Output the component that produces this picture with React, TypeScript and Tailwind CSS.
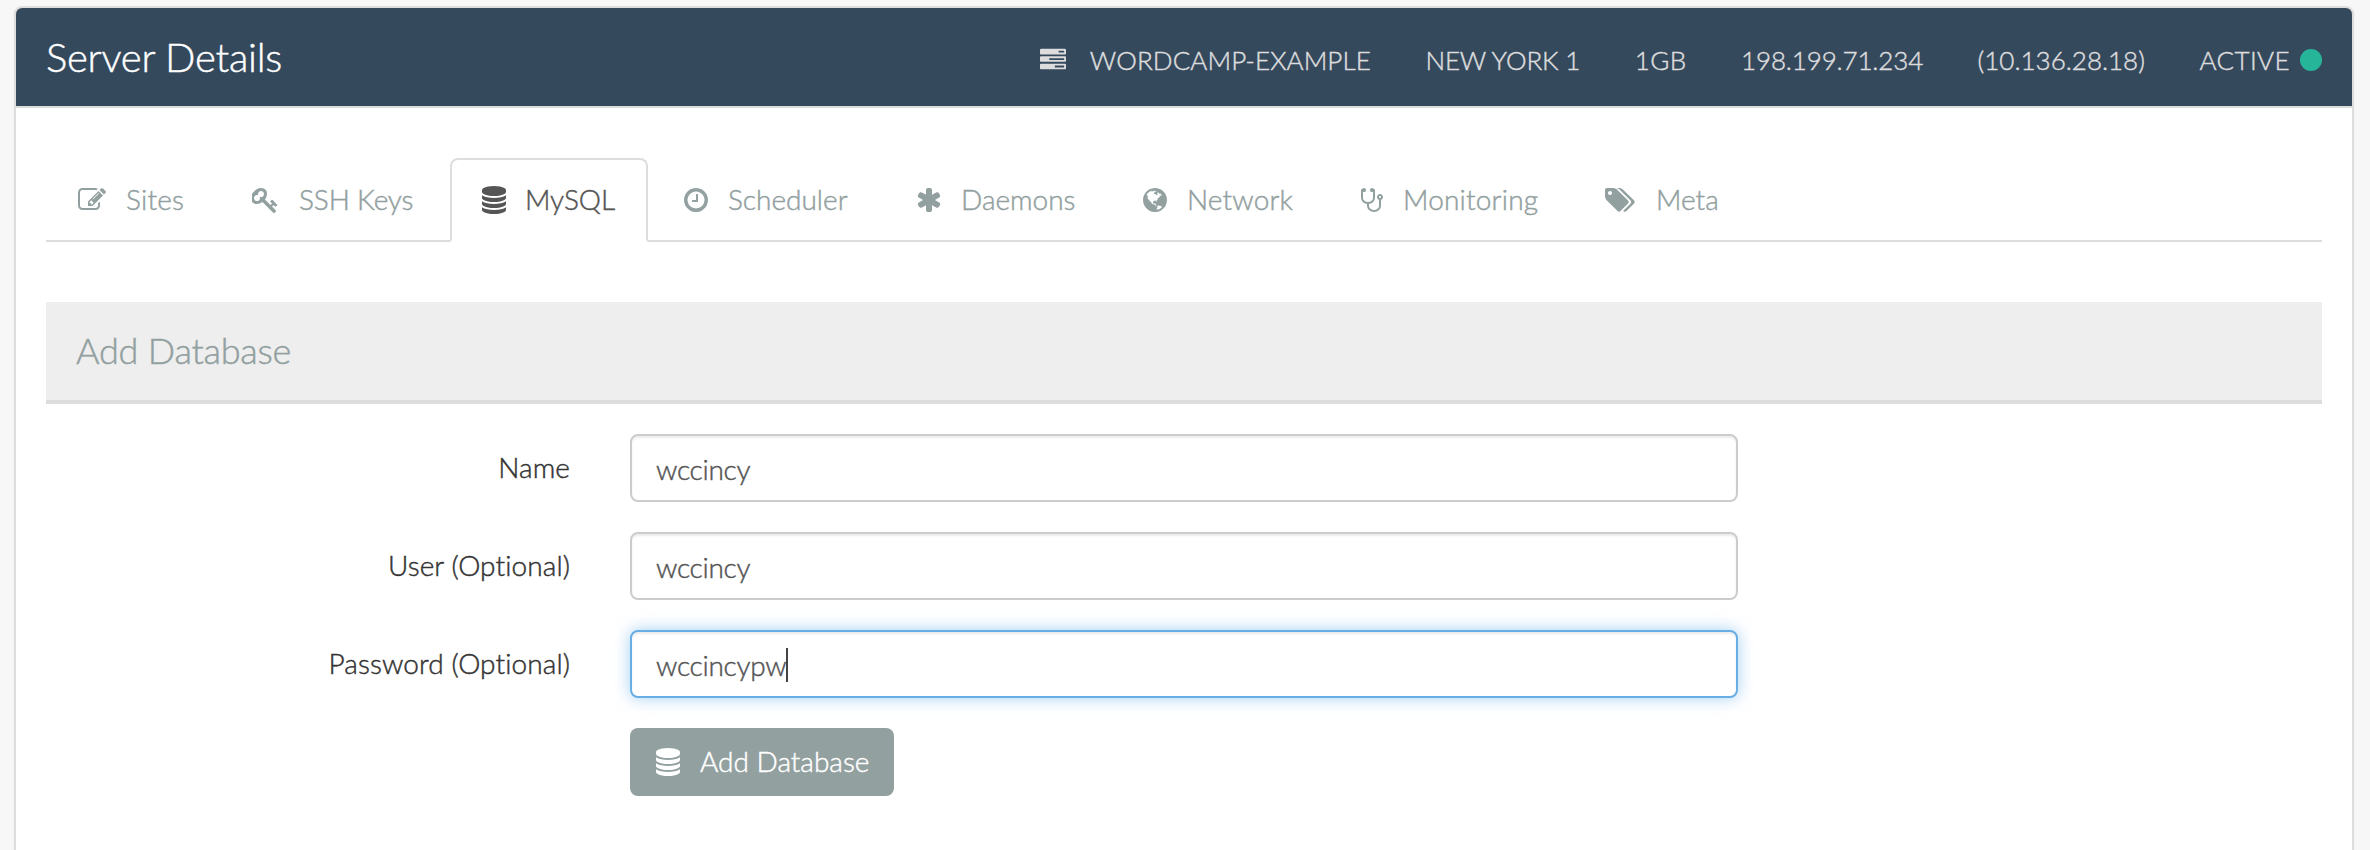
const icons = {
  edit: {
    box: '0 0 1792 1792',
    d: 'M888 1184l116-116-152-152-116 116v56h96v96h56zm440-720q-16-16-33 1l-350 350q-17 17-1 33t33-1l350-350q17-17 1-33zm80 594v190q0 119-84.5 203.5t-203.5 84.5h-832q-119 0-203.5-84.5t-84.5-203.5v-832q0-119 84.5-203.5t203.5-84.5h832q63 0 117 25 15 7 18 23 3 17-9 29l-49 49q-14 14-32 8-23-6-45-6h-832q-66 0-113 47t-47 113v832q0 66 47 113t113 47h832q66 0 113-47t47-113v-126q0-13 9-22l64-64q15-15 35-7t20 29zm-96-738l288 288-672 672h-288v-288zm444 132l-92 92-288-288 92-92q28-28 68-28t68 28l152 152q28 28 28 68t-28 68z',
  },
  key: {
    box: '64 0 1664 1792',
    d: 'M832 512q0-80-56-136t-136-56-136 56-56 136q0 42 19 83-41-19-83-19-80 0-136 56t-56 136 56 136 136 56 136-56 56-136q0-42-19-83 41 19 83 19 80 0 136-56t56-136zm851 704q0 17-49 66t-66 49q-9 0-28.5-16t-36.5-33-38.5-40-24.5-26l-96 96 220 220q28 28 28 68 0 42-39 81t-81 39q-40 0-68-28l-671-671q-176 131-365 131-163 0-265.5-102.5t-102.5-265.5q0-160 95-313t248-248 313-95q163 0 265.5 102.5t102.5 265.5q0 189-131 365l355 355 96-96q-3-3-26-24.5t-40-38.5-33-36.5-16-28.5q0-17 49-66t66-49q13 0 23 10 6 6 46 44.5t82 79.5 86.5 86 73 78 28.5 41z',
  },
  database: {
    box: '128 0 1536 1792',
    d: 'M896 768q237 0 443-43t325-127v170q0 69-103 128t-280 93.5-385 34.5-385-34.5-280-93.5-103-128v-170q119 84 325 127t443 43zm0 768q237 0 443-43t325-127v170q0 69-103 128t-280 93.5-385 34.5-385-34.5-280-93.5-103-128v-170q119 84 325 127t443 43zm0-384q237 0 443-43t325-127v170q0 69-103 128t-280 93.5-385 34.5-385-34.5-280-93.5-103-128v-170q119 84 325 127t443 43zm0-1152q208 0 385 34.5t280 93.5 103 128v128q0 69-103 128t-280 93.5-385 34.5-385-34.5-280-93.5-103-128v-128q0-69 103-128t280-93.5 385-34.5z',
  },
  clock: {
    box: '128 0 1536 1792',
    d: 'M1024 544v448q0 14-9 23t-23 9h-320q-14 0-23-9t-9-23v-64q0-14 9-23t23-9h224v-352q0-14 9-23t23-9h64q14 0 23 9t9 23zm416 352q0-148-73-273t-198-198-273-73-273 73-198 198-73 273 73 273 198 198 273 73 273-73 198-198 73-273zm224 0q0 209-103 385.5t-279.5 279.5-385.5 103-385.5-103-279.5-279.5-103-385.5 103-385.5 279.5-279.5 385.5-103 385.5 103 279.5 279.5 103 385.5z',
  },
  asterisk: {
    box: '64 0 1664 1792',
    d: 'M1546 1050q46 26 59.5 77.5t-12.5 97.5l-64 110q-26 46-77.5 59.5t-97.5-12.5l-266-153v307q0 52-38 90t-90 38h-128q-52 0-90-38t-38-90v-307l-266 153q-46 26-97.5 12.5t-77.5-59.5l-64-110q-26-46-12.5-97.5t59.5-77.5l266-154-266-154q-46-26-59.5-77.5t12.5-97.5l64-110q26-46 77.5-59.5t97.5 12.5l266 153v-307q0-52 38-90t90-38h128q52 0 90 38t38 90v307l266-153q46-26 97.5-12.5t77.5 59.5l64 110q26 46 12.5 97.5t-59.5 77.5l-266 154z',
  },
  globe: {
    box: '128 0 1536 1792',
    d: 'M896 128q209 0 385.5 103t279.5 279.5 103 385.5-103 385.5-279.5 279.5-385.5 103-385.5-103-279.5-279.5-103-385.5 103-385.5 279.5-279.5 385.5-103zm274 521q-2 1-9.5 9.5t-13.5 9.5q2 0 4.5-5t5-11 3.5-7q6-7 22-15 14-6 52-12 34-8 51 11-2-2 9.5-13t14.5-12q3-2 15-4.5t15-7.5l2-22q-12 1-17.5-7t-6.5-21q0 2-6 8 0-7-4.5-8t-11.5 1-9 1q-10-3-15-7.5t-8-16.5-4-15q-2-5-9.5-11t-9.5-10q-1-2-2.5-5.5t-3-6.5-4-5.5-5.5-2.5-7 5-7.5 10-4.5 5q-3-2-6-1.5t-4.5 1-4.5 3-5 3.5q-3 2-8.5 3t-8.5 2q15-5-1-11-10-4-16-3 9-4 7.5-12t-8.5-14h5q-1-4-8.5-8.5t-17.5-8.5-13-6q-8-5-34-9.5t-33-.5q-5 6-4.5 10.5t4 14 3.5 12.5q1 6-5.5 13t-6.5 12q0 7 14 15.5t10 21.5q-3 8-16 16t-16 12q-5 8-1.5 18.5t10.5 16.5q2 2 1.5 4t-3.5 4.5-5.5 4-6.5 3.5l-3 2q-11 5-20.5-6t-13.5-26q-7-25-16-30-23-8-29 1-5-13-41-26-25-9-58-4 6-1 0-15-7-15-19-12 3-6 4-17.5t1-13.5q3-13 12-23 1-1 7-8.5t9.5-13.5.5-6q35 4 50-11 5-5 11.5-17t10.5-17q9-6 14-5.5t14.5 5.5 14.5 5q14 1 15.5-11t-7.5-20q12 1 3-17-4-7-8-9-12-4-27 5-8 4 2 8-1-1-9.5 10.5t-16.5 17.5-16-5q-1-1-5.5-13.5t-9.5-13.5q-8 0-16 15 3-8-11-15t-24-8q19-12-8-27-7-4-20.5-5t-19.5 4q-5 7-5.5 11.5t5 8 10.5 5.5 11.5 4 8.5 3q14 10 8 14-2 1-8.5 3.5t-11.5 4.5-6 4q-3 4 0 14t-2 14q-5-5-9-17.5t-7-16.5q7 9-25 6l-10-1q-4 0-16 2t-20.5 1-13.5-8q-4-8 0-20 1-4 4-2-4-3-11-9.5t-10-8.5q-46 15-94 41 6 1 12-1 5-2 13-6.5t10-5.5q34-14 42-7l5-5q14 16 20 25-7-4-30-1-20 6-22 12 7 12 5 18-4-3-11.5-10t-14.5-11-15-5q-16 0-22 1-146 80-235 222 7 7 12 8 4 1 5 9t2.5 11 11.5-3q9 8 3 19 1-1 44 27 19 17 21 21 3 11-10 18-1-2-9-9t-9-4q-3 5 .5 18.5t10.5 12.5q-7 0-9.5 16t-2.5 35.5-1 23.5l2 1q-3 12 5.5 34.5t21.5 19.5q-13 3 20 43 6 8 8 9 3 2 12 7.5t15 10 10 10.5q4 5 10 22.5t14 23.5q-2 6 9.5 20t10.5 23q-1 0-2.5 1t-2.5 1q3 7 15.5 14t15.5 13q1 3 2 10t3 11 8 2q2-20-24-62-15-25-17-29-3-5-5.5-15.5t-4.5-14.5q2 0 6 1.5t8.5 3.5 7.5 4 2 3q-3 7 2 17.5t12 18.5 17 19 12 13q6 6 14 19.5t0 13.5q9 0 20 10.5t17 19.5q5 8 8 26t5 24q2 7 8.5 13.5t12.5 9.5l16 8 13 7q5 2 18.5 10.5t21.5 11.5q10 4 16 4t14.5-2.5 13.5-3.5q15-2 29 15t21 21q36 19 55 11-2 1 .5 7.5t8 15.5 9 14.5 5.5 8.5q5 6 18 15t18 15q6-4 7-9-3 8 7 20t18 10q14-3 14-32-31 15-49-18 0-1-2.5-5.5t-4-8.5-2.5-8.5 0-7.5 5-3q9 0 10-3.5t-2-12.5-4-13q-1-8-11-20t-12-15q-5 9-16 8t-16-9q0 1-1.5 5.5t-1.5 6.5q-13 0-15-1 1-3 2.5-17.5t3.5-22.5q1-4 5.5-12t7.5-14.5 4-12.5-4.5-9.5-17.5-2.5q-19 1-26 20-1 3-3 10.5t-5 11.5-9 7q-7 3-24 2t-24-5q-13-8-22.5-29t-9.5-37q0-10 2.5-26.5t3-25-5.5-24.5q3-2 9-9.5t10-10.5q2-1 4.5-1.5t4.5 0 4-1.5 3-6q-1-1-4-3-3-3-4-3 7 3 28.5-1.5t27.5 1.5q15 11 22-2 0-1-2.5-9.5t-.5-13.5q5 27 29 9 3 3 15.5 5t17.5 5q3 2 7 5.5t5.5 4.5 5-.5 8.5-6.5q10 14 12 24 11 40 19 44 7 3 11 2t4.5-9.5 0-14-1.5-12.5l-1-8v-18l-1-8q-15-3-18.5-12t1.5-18.5 15-18.5q1-1 8-3.5t15.5-6.5 12.5-8q21-19 15-35 7 0 11-9-1 0-5-3t-7.5-5-4.5-2q9-5 2-16 5-3 7.5-11t7.5-10q9 12 21 2 8-8 1-16 5-7 20.5-10.5t18.5-9.5q7 2 8-2t1-12 3-12q4-5 15-9t13-5l17-11q3-4 0-4 18 2 31-11 10-11-6-20 3-6-3-9.5t-15-5.5q3-1 11.5-.5t10.5-1.5q15-10-7-16-17-5-43 12zm-163 877q206-36 351-189-3-3-12.5-4.5t-12.5-3.5q-18-7-24-8 1-7-2.5-13t-8-9-12.5-8-11-7q-2-2-7-6t-7-5.5-7.5-4.5-8.5-2-10 1l-3 1q-3 1-5.5 2.5t-5.5 3-4 3 0 2.5q-21-17-36-22-5-1-11-5.5t-10.5-7-10-1.5-11.5 7q-5 5-6 15t-2 13q-7-5 0-17.5t2-18.5q-3-6-10.5-4.5t-12 4.5-11.5 8.5-9 6.5-8.5 5.5-8.5 7.5q-3 4-6 12t-5 11q-2-4-11.5-6.5t-9.5-5.5q2 10 4 35t5 38q7 31-12 48-27 25-29 40-4 22 12 26 0 7-8 20.5t-7 21.5q0 6 2 16z',
  },
  stethoscope: {
    box: '192 -128 1408 1792',
    d: 'M1472 576q0-26-19-45t-45-19-45 19-19 45 19 45 45 19 45-19 19-45zm128 0q0 62-35.5 111t-92.5 70v395q0 159-131.5 271.5t-316.5 112.5-316.5-112.5-131.5-271.5v-132q-164-20-274-128t-110-252v-512q0-26 19-45t45-19q6 0 16 2 17-30 47-48t65-18q53 0 90.5 37.5t37.5 90.5-37.5 90.5-90.5 37.5q-33 0-64-18v402q0 106 94 181t226 75 226-75 94-181v-402q-31 18-64 18-53 0-90.5-37.5t-37.5-90.5 37.5-90.5 90.5-37.5q35 0 65 18t47 48q10-2 16-2 26 0 45 19t19 45v512q0 144-110 252t-274 128v132q0 106 94 181t226 75 226-75 94-181v-395q-57-21-92.5-70t-35.5-111q0-80 56-136t136-56 136 56 56 136z',
  },
  tags: {
    box: '0 0 1920 1792',
    d: 'M448 448q0-53-37.5-90.5t-90.5-37.5-90.5 37.5-37.5 90.5 37.5 90.5 90.5 37.5 90.5-37.5 37.5-90.5zm1067 576q0 53-37 90l-491 492q-39 37-91 37-53 0-90-37l-715-716q-38-37-64.5-101t-26.5-117v-416q0-52 38-90t90-38h416q53 0 117 26.5t102 64.5l715 714q37 39 37 91zm384 0q0 53-37 90l-491 492q-39 37-91 37-36 0-59-14t-53-45l470-470q37-37 37-90 0-52-37-91l-715-714q-38-38-102-64.5t-117-26.5h224q53 0 117 26.5t102 64.5l715 714q37 39 37 91z',
  },
  tasks: {
    box: '0 0 1792 1792',
    d: 'M1024 1408h640v-128h-640v128zm-384-512h1024v-128h-1024v128zm640-512h384v-128h-384v128zm512 832v256q0 26-19 45t-45 19h-1664q-26 0-45-19t-19-45v-256q0-26 19-45t45-19h1664q26 0 45 19t19 45zm0-512v256q0 26-19 45t-45 19h-1664q-26 0-45-19t-19-45v-256q0-26 19-45t45-19h1664q26 0 45 19t19 45zm0-512v256q0 26-19 45t-45 19h-1664q-26 0-45-19t-19-45v-256q0-26 19-45t45-19h1664q26 0 45 19t19 45z',
  },
};

type IconName = keyof typeof icons;

function Icon({ name, className }: { name: IconName; className: string }) {
  return (
    <svg viewBox={icons[name].box} className={`shrink-0 fill-current ${className}`} aria-hidden="true">
      <path d={icons[name].d} />
    </svg>
  );
}

const tabs: { icon: IconName; label: string; size: string; width: string; active?: boolean }[] = [
  { icon: 'edit', label: 'Sites', size: 'w-[28px]', width: 'w-[170px] gap-[20px] tracking-[0.2px]' },
  { icon: 'key', label: 'SSH Keys', size: 'w-[26px]', width: 'w-[226px] gap-[21px] tracking-[-0.15px]' },
  { icon: 'database', label: 'MySQL', size: 'w-[24px]', width: 'w-[198px] gap-[19px]', active: true },
  { icon: 'clock', label: 'Scheduler', size: 'w-[24px]', width: 'w-[228px] gap-[20px]' },
  { icon: 'asterisk', label: 'Daemons', size: 'w-[26px]', width: 'w-[223px] gap-[19px]' },
  { icon: 'globe', label: 'Network', size: 'w-[24px]', width: 'w-[214px] gap-[20px] tracking-[0.15px]' },
  { icon: 'stethoscope', label: 'Monitoring', size: 'w-[22px]', width: 'w-[240px] gap-[20px] tracking-[0.2px]' },
  { icon: 'tags', label: 'Meta', size: 'w-[30px]', width: 'w-[180px] gap-[21px]' },
];

const fields = [
  { label: 'Name', value: 'wccincy' },
  { label: 'User (Optional)', value: 'wccincy' },
  { label: 'Password (Optional)', value: 'wccincypw', focused: true },
];

function Field({ label, value, focused }: { label: string; value: string; focused?: boolean }) {
  return (
    <div className="flex">
      <div className="flex h-[68px] w-[524px] items-center justify-end pb-[2px] tracking-[0.1px] text-[#333]">{label}</div>
      <div
        className={`ml-[60px] flex h-[68px] w-[1108px] items-center rounded-[8px] border-2 bg-white pl-6 pt-[2px] text-[#555] ${
          focused
            ? 'border-[#68aee6] shadow-[inset_0_2px_2px_rgba(0,0,0,0.075),0_0_16px_rgba(102,175,233,0.6)]'
            : 'border-[#ccc] shadow-[inset_0_2px_2px_rgba(0,0,0,0.075)]'
        }`}
      >
        <span className="tracking-[-0.3px]">{value}</span>
        {focused && <span className="h-[34px] w-[2px] bg-[#444]" />}
      </div>
    </div>
  );
}

export default function App() {
  return (
    <div className="h-[850px] overflow-hidden bg-[#f7f7f7] pl-[14px] pr-[16px] pt-[6px] font-['Lato',sans-serif] text-[28px] leading-[40px] font-light [-webkit-text-stroke:0.45px_currentColor]">
      <div className="h-[900px] rounded-t-[8px] border-2 border-[#ddd] bg-white shadow-[0_2px_2px_rgba(0,0,0,0.05)]">
        <header className="flex h-[100px] items-center justify-between rounded-t-[6px] border-b-2 border-[#ddd] bg-[#35495d] px-[30px] text-white">
          <h1 className="pb-[1px] text-[40px] leading-[44px] tracking-[-0.25px]">Server Details</h1>
          <div className="flex items-center gap-[54.5px] pt-[6px] text-[26px] text-[#ddd]">
            <span className="flex items-center gap-[24px] tracking-[0.1px]">
              <Icon name="tasks" className="h-[26px] w-[26px]" />
              WORDCAMP-EXAMPLE
            </span>
            <span className="tracking-[-0.15px]">NEW YORK 1</span>
            <span className="tracking-[0.4px]">1GB</span>
            <span className="tracking-[-0.15px]">198.199.71.234</span>
            <span>(10.136.28.18)</span>
            <span className="flex items-center gap-[10px] tracking-[0.4px]">
              ACTIVE
              <span className="h-[22px] w-[22px] rounded-full bg-[#27b599]" />
            </span>
          </div>
        </header>

        <main className="px-[30px] pt-[50px]">
          <nav className="flex h-[84px] gap-[4px] border-b-2 border-[#ddd]">
            {tabs.map((t) => (
              <div
                key={t.label}
                className={`flex h-[84px] shrink-0 items-center rounded-t-[8px] border-2 pl-[30px] ${t.width} ${
                  t.active ? 'border-[#ddd] border-b-white bg-white text-[#555]' : 'border-transparent text-[#92a0a0]'
                }`}
              >
                <Icon name={t.icon} className={`h-[28px] ${t.size}`} />
                <span className="pb-[2px] whitespace-nowrap">{t.label}</span>
              </div>
            ))}
          </nav>

          <h2 className="mt-[60px] flex h-[102px] items-center border-b-4 border-[#ddd] bg-[#eee] px-[30px] pb-[2px] text-[36px] leading-[40px] tracking-[-0.22px] text-[#92a0a0]">
            Add Database
          </h2>

          <form className="mt-[30px] flex flex-col gap-[30px]">
            {fields.map((f) => (
              <Field key={f.label} {...f} />
            ))}
            <button
              type="button"
              className="ml-[584px] flex h-[68px] w-[264px] items-center gap-[20px] rounded-[8px] bg-[#92a0a0] pl-[26px] text-white"
            >
              <Icon name="database" className="h-[28px] w-[24px]" />
              <span className="pb-[2px] whitespace-nowrap">Add Database</span>
            </button>
          </form>
        </main>
      </div>
    </div>
  );
}
